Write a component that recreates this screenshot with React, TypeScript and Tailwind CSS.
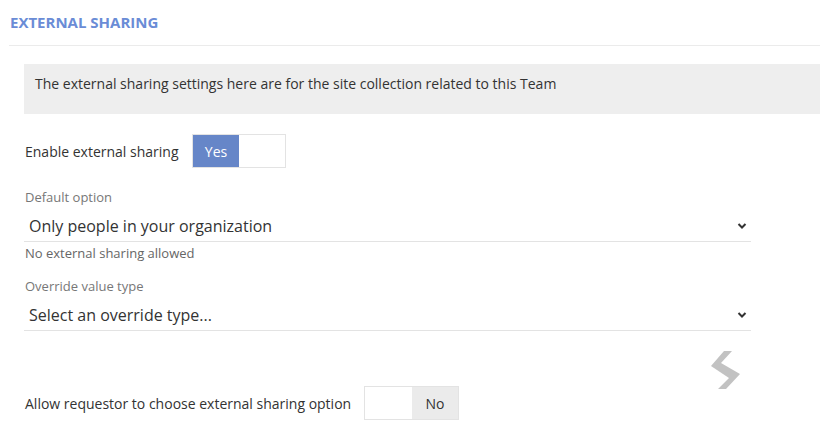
import React from "react";

function Chevron() {
  return (
    <svg width="10" height="10" viewBox="0 0 10 10" className="block">
      <path d="M1.5 3 L5 6.5 L8.5 3" fill="none" stroke="#333" strokeWidth="2" />
    </svg>
  );
}

function SelectField({ value }: { value: string }) {
  return (
    <div className="w-[727px] h-[34px] border-b border-[#e3e3e3] flex items-center justify-between pl-[5px] pr-[4px] pt-[3px]">
      <span className="text-[16px] text-[#333]">{value}</span>
      <Chevron />
    </div>
  );
}

function Mark() {
  return (
    <svg width="32" height="40" viewBox="0 0 32 40" className="block">
      <polygon
        points="14,1 22,1 11,13 30,24 16,39 8,39 19,28 1,16"
        fill="#c2c2c2"
      />
    </svg>
  );
}

export default function App() {
  return (
    <div
      className="w-[820px] h-[428px] bg-white overflow-hidden text-[#333]"
      style={{ fontFamily: '"Open Sans", sans-serif' }}
    >
      <div className="ml-[9px] h-[46px] border-b border-[#ebebeb] pt-[12px] pl-[1px]">
        <h2 className="text-[15px] font-bold text-[#6a8cd6] leading-[20px]">EXTERNAL SHARING</h2>
      </div>

      <div className="ml-[24px] mt-[18px] h-[50px] bg-[#eeeeee] pl-[11px] pt-[10px]">
        <p className="text-[14px] leading-[20px] text-[#333]">
          The external sharing settings here are for the site collection related to this Team
        </p>
      </div>

      <div className="ml-[24px] mt-[20px] flex items-center">
        <span className="text-[14px] pl-[1px] w-[168px]">Enable external sharing</span>
        <div className="flex h-[34px] border border-[#e3e3e3]">
          <div className="w-[46px] bg-[#6686c8] text-white text-[14px] flex items-center justify-center">Yes</div>
          <div className="w-[46px] bg-white" />
        </div>
      </div>

      <div className="ml-[24px] mt-[20px]">
        <div className="text-[13px] text-[#777] pl-[1px] leading-[18px]">Default option</div>
        <div className="mt-[2px]">
          <SelectField value="Only people in your organization" />
        </div>
        <div className="text-[13px] text-[#666] pl-[1px] leading-[18px] mt-[2px]">No external sharing allowed</div>

        <div className="text-[13px] text-[#777] pl-[1px] leading-[18px] mt-[15px]">Override value type</div>
        <div className="mt-[2px]">
          <SelectField value="Select an override type..." />
        </div>
      </div>

      <div className="flex justify-end w-[742px] mt-[19px] h-[38px]">
        <Mark />
      </div>

      <div className="ml-[24px] mt-[-2px] flex items-center">
        <span className="text-[14px] pl-[1px] w-[340px]">Allow requestor to choose external sharing option</span>
        <div className="flex h-[34px] border border-[#e3e3e3]">
          <div className="w-[47px] bg-white" />
          <div className="w-[46px] bg-[#ebebeb] text-[#333] text-[14px] flex items-center justify-center">No</div>
        </div>
      </div>
    </div>
  );
}
